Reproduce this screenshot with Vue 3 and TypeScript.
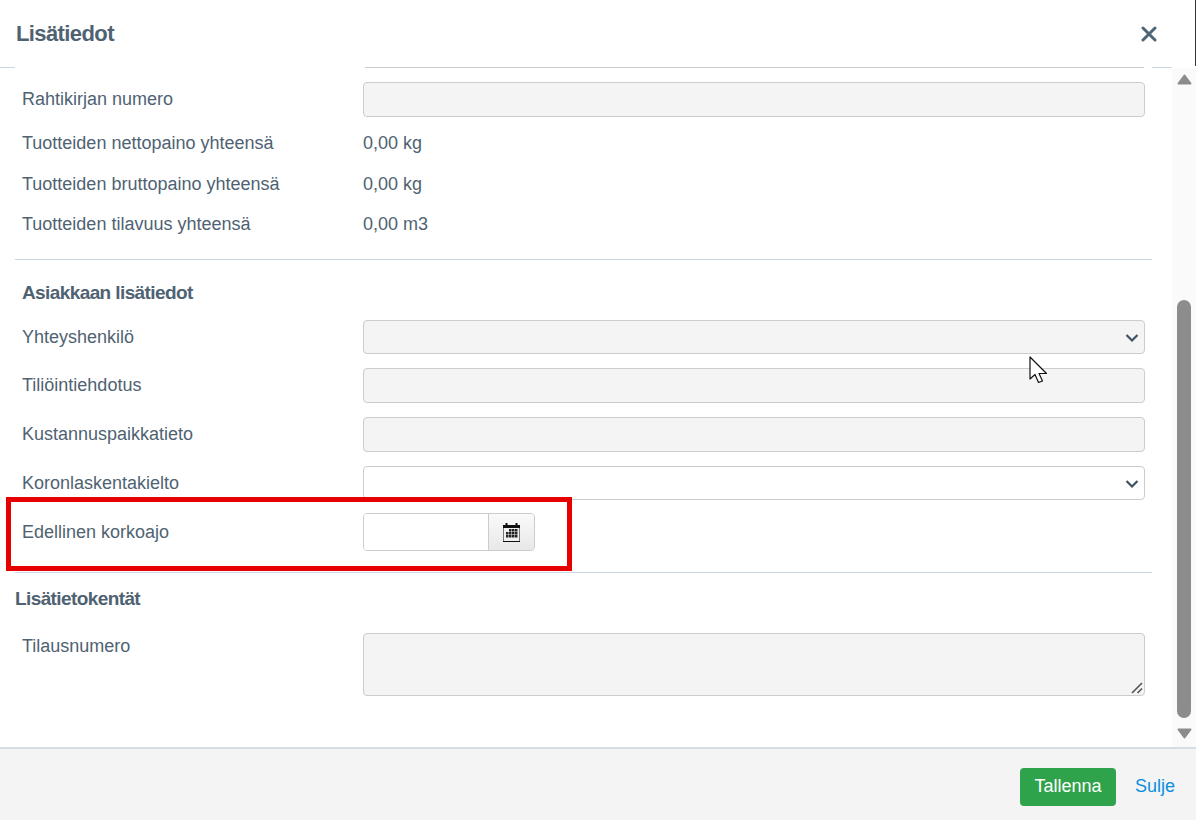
<script setup lang="ts">
interface Row { label: string; kind: 'input' | 'select' | 'text'; value?: string; cls: string }
const firstRows: Row[] = [
  { label: 'Rahtikirjan numero', kind: 'input', cls: 'r-a' },
  { label: 'Tuotteiden nettopaino yhteensä', kind: 'text', value: '0,00 kg', cls: 'r-b' },
  { label: 'Tuotteiden bruttopaino yhteensä', kind: 'text', value: '0,00 kg', cls: 'r-c' },
  { label: 'Tuotteiden tilavuus yhteensä', kind: 'text', value: '0,00 m3', cls: 'r-e' },
]
const secondRows: Row[] = [
  { label: 'Yhteyshenkilö', kind: 'select', cls: 'r-s' },
  { label: 'Tiliöintiehdotus', kind: 'input', cls: 'r-i' },
  { label: 'Kustannuspaikkatieto', kind: 'input', cls: 'r-i' },
  { label: 'Koronlaskentakielto', kind: 'select', cls: 'r-w' },
]
</script>

<template>
  <div class="modal">
    <header class="head">
      <h1>Lisätiedot</h1>
      <svg class="close" width="16" height="16" viewBox="0 0 16 16" aria-label="Sulje">
        <path d="M2 2 L14 14 M14 2 L2 14" stroke="#4f6475" stroke-width="3" stroke-linecap="round" />
      </svg>
    </header>
    <div class="strip">
      <i class="s1"></i><i class="s2"></i><i class="s3"></i>
    </div>
    <div class="middle">
      <main class="content">
        <div v-for="r in firstRows" :key="r.label" class="row" :class="r.cls">
          <label>{{ r.label }}</label>
          <div v-if="r.kind === 'input'" class="field disabled"></div>
          <span v-else class="value">{{ r.value }}</span>
        </div>
        <hr class="rule rule-1" />
        <h2 class="sub">Asiakkaan lisätiedot</h2>
        <div v-for="r in secondRows" :key="r.label" class="row" :class="r.cls">
          <label>{{ r.label }}</label>
          <div class="field" :class="{ disabled: r.label !== 'Koronlaskentakielto' }">
            <svg v-if="r.kind === 'select'" class="chev" width="14" height="10" viewBox="0 0 14 10">
              <path d="M1.5 2 L7 7.5 L12.5 2" fill="none" stroke="#3f5263" stroke-width="2.2" />
            </svg>
          </div>
        </div>
        <div class="row r-d">
          <label>Edellinen korkoajo</label>
          <div class="date">
            <div class="date-in"></div>
            <div class="date-btn">
              <svg width="17" height="19" viewBox="0 0 17 19">
                <path d="M0 2h2.5V0h2v2h8V0h2v2H17v17H0z" fill="#111" />
                <path d="M0 5h1v13H0zM16 5h1v13h-1z" fill="#777" />
                <rect x="1" y="5" width="15" height="13" fill="#f0f0f0" />
                <g fill="#222">
                  <rect x="6" y="6" width="2.5" height="2.5" /><rect x="9" y="6" width="2.5" height="2.5" /><rect x="12" y="6" width="2.5" height="2.5" />
                  <rect x="3" y="9" width="2.5" height="2.5" /><rect x="6" y="9" width="2.5" height="2.5" /><rect x="9" y="9" width="2.5" height="2.5" /><rect x="12" y="9" width="2.5" height="2.5" />
                  <rect x="3" y="12" width="2.5" height="2.5" /><rect x="6" y="12" width="2.5" height="2.5" /><rect x="9" y="12" width="2.5" height="2.5" /><rect x="12" y="12" width="2.5" height="2.5" />
                </g>
              </svg>
            </div>
          </div>
        </div>
        <hr class="rule rule-2" />
        <h2 class="sub sub-out">Lisätietokentät</h2>
        <div class="row r-t">
          <label>Tilausnumero</label>
          <div class="field disabled area">
            <svg class="grip" width="12" height="12" viewBox="0 0 12 12">
              <path d="M1 11 L11 1 M6.5 11 L11 6.5" stroke="#555" stroke-width="1.6" />
            </svg>
          </div>
        </div>
      </main>
      <aside class="bar">
        <svg class="arrow" width="15" height="11" viewBox="0 0 15 11"><path d="M7.5 1.5 L13.5 9.5 H1.5 Z" fill="#8c8c8c" stroke="#8c8c8c" stroke-width="2" stroke-linejoin="round" /></svg>
        <div class="track"><div class="thumb"></div></div>
        <svg class="arrow" width="15" height="11" viewBox="0 0 15 11"><path d="M7.5 9.5 L13.5 1.5 H1.5 Z" fill="#8c8c8c" stroke="#8c8c8c" stroke-width="2" stroke-linejoin="round" /></svg>
      </aside>
    </div>
    <footer class="foot">
      <button class="save" type="button">Tallenna</button>
      <a class="link">Sulje</a>
    </footer>
    <div class="edge"></div>
    <div class="mark"></div>
    <svg class="cursor" width="20" height="29" viewBox="0 0 20 29">
      <path d="M1 1 V23 L6 18.5 L9.5 26.5 L13.5 25 L10 17.5 L17.5 17.5 Z" fill="#fff" stroke="#111" stroke-width="1.2" stroke-linejoin="round" />
    </svg>
  </div>
</template>

<style>
html, body { margin: 0; background: #fff; }
</style>

<style scoped>
.modal {
  position: relative;
  width: 1196px;
  height: 820px;
  overflow: hidden;
  display: flex;
  flex-direction: column;
  background: #fff;
  color: #4f6272;
  font-family: "Liberation Sans", Arial, sans-serif;
  font-size: 18px;
}
.head {
  height: 67px;
  flex: none;
  display: flex;
  align-items: center;
  justify-content: space-between;
  padding: 0 39px 0 16px;
}
h1 { margin: 0; font-size: 22px; letter-spacing: -0.6px; font-weight: 700; color: #4f6272; line-height: 24px; }
.strip { height: 1px; flex: none; display: flex; }
.strip i { display: block; height: 1px; }
.s1 { width: 15px; background: #c8d6df; margin-right: 350px; }
.s2 { width: 779px; background: #ccc; margin-right: 8px; }
.s3 { width: 20px; background: #c8d6df; }
.middle { height: 679px; flex: none; display: flex; }
.content { width: 1172px; flex: none; padding: 13px 0 0; box-sizing: border-box; }
.row {
  display: grid;
  grid-template-columns: 341px 782px;
  margin-left: 22px;
  align-items: center;
}
.row label { line-height: 20px; }
.field {
  position: relative;
  box-sizing: border-box;
  height: 35px;
  border: 1px solid #ccc;
  border-radius: 4px;
  background: #fff;
}
.disabled { background: #f4f4f4; }
.value { line-height: 20px; }
.r-a { height: 36px; }
.r-b { height: 20px; margin-top: 16px; }
.r-c { height: 20px; margin-top: 21px; }
.r-e { height: 20px; margin-top: 20px; }
.rule { border: 0; border-top: 1px solid #c8d6df; margin: 0 20px 0 15px; }
.rule-1 { margin-top: 25px; }
.sub { margin: 23px 0 0 22px; font-size: 19px; letter-spacing: -0.6px; line-height: 20px; font-weight: 700; color: #4f6272; }
.r-s { margin-top: 17px; height: 34px; }
.r-i { margin-top: 14px; height: 35px; }
.r-i label { margin-top: -2px; }
.r-w { margin-top: 14px; height: 34px; }
.r-s .field, .r-w .field { height: 34px; }
.chev { position: absolute; right: 5px; top: 12px; }
.r-d { margin-top: 13px; height: 38px; }
.date { display: flex; height: 38px; width: 172px; box-sizing: border-box; border: 1px solid #ccc; border-radius: 4px; overflow: hidden; }
.date-in { flex: 1; background: #fff; }
.date-btn {
  width: 45px;
  border-left: 1px solid #ccc;
  background: linear-gradient(#fafafa, #e8e8e8);
  display: flex;
  align-items: center;
  justify-content: center;
}
.rule-2 { margin-top: 21px; }
.sub-out { margin: 16px 0 0 15px; }
.r-t { margin-top: 24px; align-items: start; height: 63px; }
.area { height: 63px; }
.r-t label { margin-top: 3px; }
.grip { position: absolute; right: 1px; bottom: 1px; }
.bar {
  width: 24px;
  flex: none;
  background: #fafafa;
  display: flex;
  flex-direction: column;
  align-items: center;
  padding: 6px 0 8px;
  box-sizing: border-box;
}
.arrow { flex: none; }
.track { flex: 1; width: 14px; display: flex; flex-direction: column; justify-content: flex-end; padding-bottom: 10px; }
.thumb { height: 418px; background: #8c8c8c; border-radius: 7px; }
.foot {
  flex: 1;
  background: #f4f4f4;
  border-top: 2px solid #d5dde2;
  box-sizing: border-box;
  display: flex;
  align-items: center;
  justify-content: flex-end;
  padding: 4px 21px 0 0;
  gap: 19px;
}
.save {
  width: 96px;
  height: 38px;
  border: 0;
  border-radius: 4px;
  background: #2fa34c;
  color: #fff;
  font: 18px "Liberation Sans", Arial, sans-serif;
}
.link { color: #0b8fe0; font-size: 18px; }
.edge { position: absolute; right: 0; top: 0; width: 1px; height: 66px; background: #333; }
.mark {
  position: absolute;
  left: 6px;
  top: 497px;
  width: 566px;
  height: 74px;
  box-sizing: border-box;
  border: 5px solid #e60000;
  pointer-events: none;
}
.cursor { position: absolute; left: 1029px; top: 356px; }
</style>
